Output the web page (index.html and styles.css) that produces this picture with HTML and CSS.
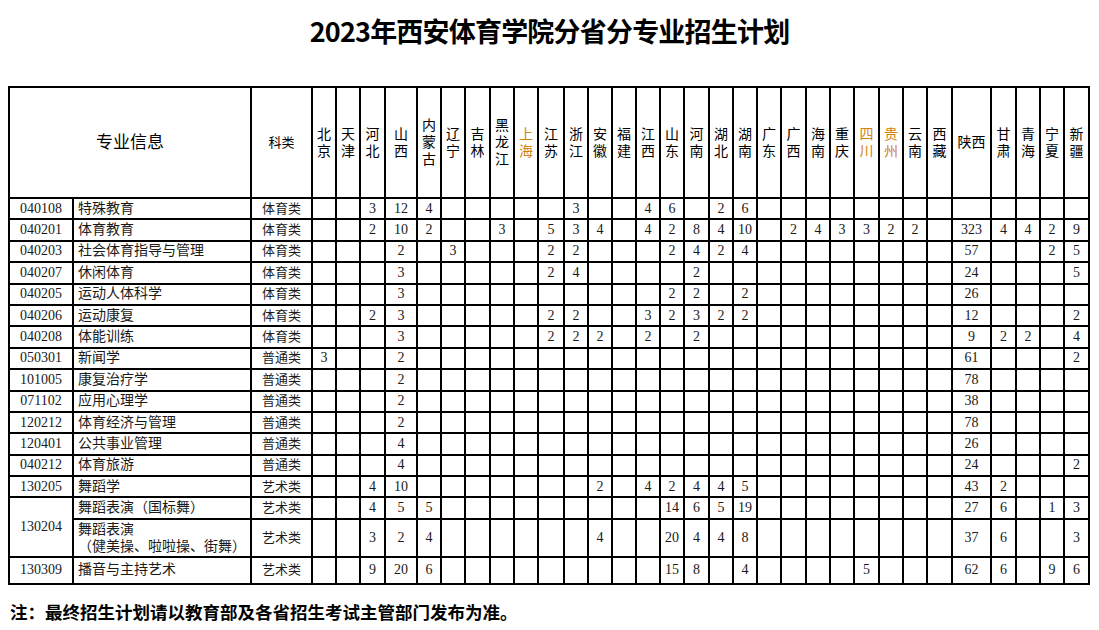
FILE: index.html
```html
<!DOCTYPE html>
<html lang="zh-CN">
<head>
<meta charset="utf-8">
<title>2023年西安体育学院分省分专业招生计划</title>
<link rel="stylesheet" href="styles.css">
</head>
<body>
<h1 class="title">2023年西安体育学院分省分专业招生计划</h1>
<table class="plan">
<colgroup>
<col class="w64"><col class="w178"><col class="w61">
<col class="w24"><col class="w24"><col class="w25"><col class="w32"><col class="w24"><col class="w24"><col class="w25"><col class="w24"><col class="w24"><col class="w26">
<col class="w24"><col class="w24"><col class="w24"><col class="w24"><col class="w24"><col class="w25"><col class="w24"><col class="w24">
<col class="w24"><col class="w25"><col class="w24"><col class="w24"><col class="w25"><col class="w24"><col class="w24"><col class="w25">
<col class="w39"><col class="w25"><col class="w24"><col class="w24"><col class="w25">
</colgroup>
<tr class="head">
<th colspan="2" class="main">专业信息</th>
<th class="kind">科类</th>
<th>北<br>京</th><th>天<br>津</th><th>河<br>北</th><th>山<br>西</th><th>内<br>蒙<br>古</th><th>辽<br>宁</th><th>吉<br>林</th><th>黑<br>龙<br>江</th><th class="hl">上<br>海</th><th>江<br>苏</th>
<th>浙<br>江</th><th>安<br>徽</th><th>福<br>建</th><th>江<br>西</th><th>山<br>东</th><th>河<br>南</th><th>湖<br>北</th><th>湖<br>南</th>
<th>广<br>东</th><th>广<br>西</th><th>海<br>南</th><th>重<br>庆</th><th class="hl">四<br>川</th><th class="hl">贵<br>州</th><th>云<br>南</th><th>西<br>藏</th>
<th>陕西</th><th>甘<br>肃</th><th>青<br>海</th><th>宁<br>夏</th><th>新<br>疆</th>
</tr>
<tr class="row">
<td>040108</td><td class="name">特殊教育</td><td class="kind">体育类</td>
<td></td><td></td><td>3</td><td>12</td><td>4</td><td></td><td></td><td></td><td></td><td></td>
<td>3</td><td></td><td></td><td>4</td><td>6</td><td></td><td>2</td><td>6</td>
<td></td><td></td><td></td><td></td><td></td><td></td><td></td><td></td>
<td></td><td></td><td></td><td></td><td></td>
</tr>
<tr class="row">
<td>040201</td><td class="name">体育教育</td><td class="kind">体育类</td>
<td></td><td></td><td>2</td><td>10</td><td>2</td><td></td><td></td><td>3</td><td></td><td>5</td>
<td>3</td><td>4</td><td></td><td>4</td><td>2</td><td>8</td><td>4</td><td>10</td>
<td></td><td>2</td><td>4</td><td>3</td><td>3</td><td>2</td><td>2</td><td></td>
<td>323</td><td>4</td><td>4</td><td>2</td><td>9</td>
</tr>
<tr class="row">
<td>040203</td><td class="name">社会体育指导与管理</td><td class="kind">体育类</td>
<td></td><td></td><td></td><td>2</td><td></td><td>3</td><td></td><td></td><td></td><td>2</td>
<td>2</td><td></td><td></td><td></td><td>2</td><td>4</td><td>2</td><td>4</td>
<td></td><td></td><td></td><td></td><td></td><td></td><td></td><td></td>
<td>57</td><td></td><td></td><td>2</td><td>5</td>
</tr>
<tr class="row">
<td>040207</td><td class="name">休闲体育</td><td class="kind">体育类</td>
<td></td><td></td><td></td><td>3</td><td></td><td></td><td></td><td></td><td></td><td>2</td>
<td>4</td><td></td><td></td><td></td><td></td><td>2</td><td></td><td></td>
<td></td><td></td><td></td><td></td><td></td><td></td><td></td><td></td>
<td>24</td><td></td><td></td><td></td><td>5</td>
</tr>
<tr class="row">
<td>040205</td><td class="name">运动人体科学</td><td class="kind">体育类</td>
<td></td><td></td><td></td><td>3</td><td></td><td></td><td></td><td></td><td></td><td></td>
<td></td><td></td><td></td><td></td><td>2</td><td>2</td><td></td><td>2</td>
<td></td><td></td><td></td><td></td><td></td><td></td><td></td><td></td>
<td>26</td><td></td><td></td><td></td><td></td>
</tr>
<tr class="row">
<td>040206</td><td class="name">运动康复</td><td class="kind">体育类</td>
<td></td><td></td><td>2</td><td>3</td><td></td><td></td><td></td><td></td><td></td><td>2</td>
<td>2</td><td></td><td></td><td>3</td><td>2</td><td>3</td><td>2</td><td>2</td>
<td></td><td></td><td></td><td></td><td></td><td></td><td></td><td></td>
<td>12</td><td></td><td></td><td></td><td>2</td>
</tr>
<tr class="row">
<td>040208</td><td class="name">体能训练</td><td class="kind">体育类</td>
<td></td><td></td><td></td><td>3</td><td></td><td></td><td></td><td></td><td></td><td>2</td>
<td>2</td><td>2</td><td></td><td>2</td><td></td><td>2</td><td></td><td></td>
<td></td><td></td><td></td><td></td><td></td><td></td><td></td><td></td>
<td>9</td><td>2</td><td>2</td><td></td><td>4</td>
</tr>
<tr class="row">
<td>050301</td><td class="name">新闻学</td><td class="kind">普通类</td>
<td>3</td><td></td><td></td><td>2</td><td></td><td></td><td></td><td></td><td></td><td></td>
<td></td><td></td><td></td><td></td><td></td><td></td><td></td><td></td>
<td></td><td></td><td></td><td></td><td></td><td></td><td></td><td></td>
<td>61</td><td></td><td></td><td></td><td>2</td>
</tr>
<tr class="row">
<td>101005</td><td class="name">康复治疗学</td><td class="kind">普通类</td>
<td></td><td></td><td></td><td>2</td><td></td><td></td><td></td><td></td><td></td><td></td>
<td></td><td></td><td></td><td></td><td></td><td></td><td></td><td></td>
<td></td><td></td><td></td><td></td><td></td><td></td><td></td><td></td>
<td>78</td><td></td><td></td><td></td><td></td>
</tr>
<tr class="row">
<td>071102</td><td class="name">应用心理学</td><td class="kind">普通类</td>
<td></td><td></td><td></td><td>2</td><td></td><td></td><td></td><td></td><td></td><td></td>
<td></td><td></td><td></td><td></td><td></td><td></td><td></td><td></td>
<td></td><td></td><td></td><td></td><td></td><td></td><td></td><td></td>
<td>38</td><td></td><td></td><td></td><td></td>
</tr>
<tr class="row">
<td>120212</td><td class="name">体育经济与管理</td><td class="kind">普通类</td>
<td></td><td></td><td></td><td>2</td><td></td><td></td><td></td><td></td><td></td><td></td>
<td></td><td></td><td></td><td></td><td></td><td></td><td></td><td></td>
<td></td><td></td><td></td><td></td><td></td><td></td><td></td><td></td>
<td>78</td><td></td><td></td><td></td><td></td>
</tr>
<tr class="row">
<td>120401</td><td class="name">公共事业管理</td><td class="kind">普通类</td>
<td></td><td></td><td></td><td>4</td><td></td><td></td><td></td><td></td><td></td><td></td>
<td></td><td></td><td></td><td></td><td></td><td></td><td></td><td></td>
<td></td><td></td><td></td><td></td><td></td><td></td><td></td><td></td>
<td>26</td><td></td><td></td><td></td><td></td>
</tr>
<tr class="row">
<td>040212</td><td class="name">体育旅游</td><td class="kind">普通类</td>
<td></td><td></td><td></td><td>4</td><td></td><td></td><td></td><td></td><td></td><td></td>
<td></td><td></td><td></td><td></td><td></td><td></td><td></td><td></td>
<td></td><td></td><td></td><td></td><td></td><td></td><td></td><td></td>
<td>24</td><td></td><td></td><td></td><td>2</td>
</tr>
<tr class="row">
<td>130205</td><td class="name">舞蹈学</td><td class="kind">艺术类</td>
<td></td><td></td><td>4</td><td>10</td><td></td><td></td><td></td><td></td><td></td><td></td>
<td></td><td>2</td><td></td><td>4</td><td>2</td><td>4</td><td>4</td><td>5</td>
<td></td><td></td><td></td><td></td><td></td><td></td><td></td><td></td>
<td>43</td><td>2</td><td></td><td></td><td></td>
</tr>
<tr class="row">
<td rowspan="2">130204</td><td class="name">舞蹈表演（国标舞）</td><td class="kind">艺术类</td>
<td></td><td></td><td>4</td><td>5</td><td>5</td><td></td><td></td><td></td><td></td><td></td>
<td></td><td></td><td></td><td></td><td>14</td><td>6</td><td>5</td><td>19</td>
<td></td><td></td><td></td><td></td><td></td><td></td><td></td><td></td>
<td>27</td><td>6</td><td></td><td>1</td><td>3</td>
</tr>
<tr class="tall">
<td class="name">舞蹈表演<br>（健美操、啦啦操、街舞）</td><td class="kind">艺术类</td>
<td></td><td></td><td>3</td><td>2</td><td>4</td><td></td><td></td><td></td><td></td><td></td>
<td></td><td>4</td><td></td><td></td><td>20</td><td>4</td><td>4</td><td>8</td>
<td></td><td></td><td></td><td></td><td></td><td></td><td></td><td></td>
<td>37</td><td>6</td><td></td><td></td><td>3</td>
</tr>
<tr class="last">
<td>130309</td><td class="name">播音与主持艺术</td><td class="kind">艺术类</td>
<td></td><td></td><td>9</td><td>20</td><td>6</td><td></td><td></td><td></td><td></td><td></td>
<td></td><td></td><td></td><td></td><td>15</td><td>8</td><td></td><td>4</td>
<td></td><td></td><td></td><td></td><td>5</td><td></td><td></td><td></td>
<td>62</td><td>6</td><td></td><td>9</td><td>6</td>
</tr>
</table>
<p class="note">注：最终招生计划请以教育部及各省招生考试主管部门发布为准。</p>
</body>
</html>
```
FILE: styles.css
```css
html, body {
  background: #fff;
}
body {
  margin: 8px;
  color: #000;
  font-family: "Liberation Serif", "Noto Sans CJK SC", serif;
}
.title {
  margin: 0 0 32px;
  text-align: center;
  font-family: "Noto Sans CJK SC", sans-serif;
  font-weight: 700;
  font-size: 27px;
  line-height: 46px;
  letter-spacing: -0.8px;
}
.plan {
  border-collapse: collapse;
  table-layout: fixed;
  width: 1080px;
}
.plan th,
.plan td {
  border: 2px solid #000;
  padding: 0;
  text-align: center;
  vertical-align: middle;
  font-size: 14px;
  font-weight: 400;
  line-height: 16px;
  white-space: nowrap;
  overflow: hidden;
  color: #1a1a1a;
}
.plan th {
  line-height: 17px;
  color: #000;
}
.plan .main {
  font-size: 17px;
}
.plan .kind {
  font-size: 13px;
}
.plan .name {
  text-align: left;
  padding-left: 4px;
}
.plan .hl {
  color: #d4810f;
}
.head { height: 111px; }
.row { height: 21.4px; }
.tall { height: 38px; }
.tall td { line-height: 17px; }
.last { height: 27px; }

.w24 { width: 24px; }
.w25 { width: 25px; }
.w26 { width: 26px; }
.w32 { width: 32px; }
.w39 { width: 39px; }
.w61 { width: 61px; }
.w64 { width: 64px; }
.w178 { width: 178px; }

.note {
  margin: 17px 0 0 2px;
  font-family: "Noto Sans CJK SC", sans-serif;
  font-weight: 700;
  font-size: 17.5px;
  line-height: 20px;
}
```
